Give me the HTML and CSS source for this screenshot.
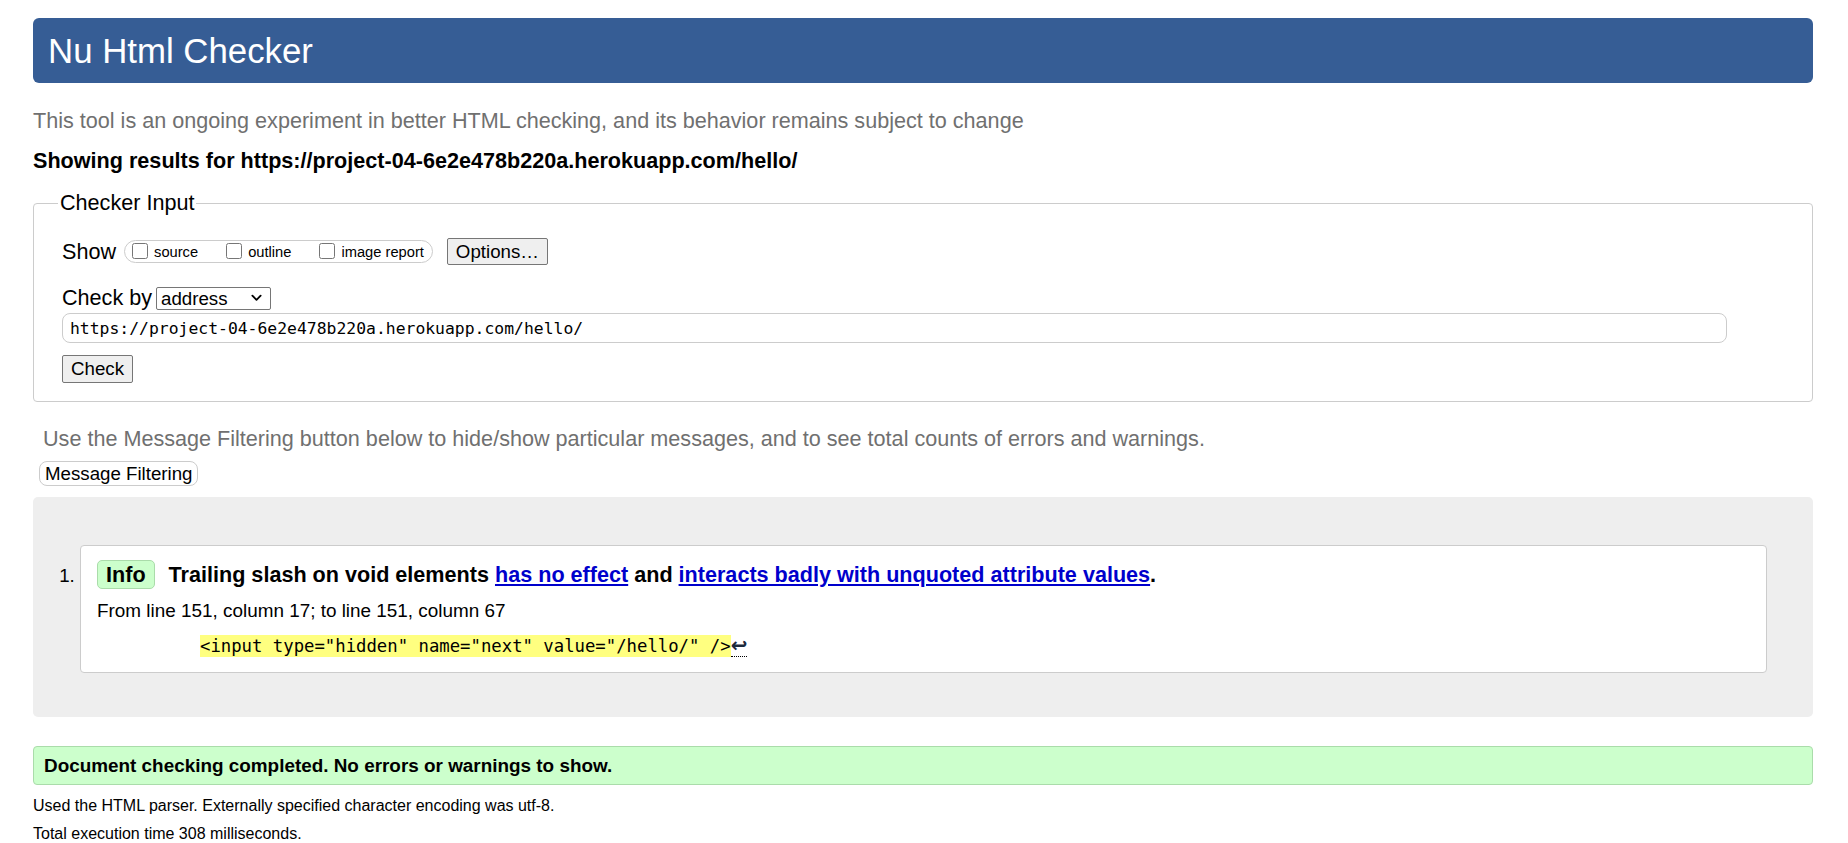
FILE: index.html
```html
<!DOCTYPE html>
<html lang="en">
<head>
<meta charset="utf-8">
<title>Showing results for https://project-04-6e2e478b220a.herokuapp.com/hello/ - Nu Html Checker</title>
<link rel="stylesheet" href="styles.css">
</head>
<body>
<h1 class="banner">Nu Html Checker</h1>
<p class="intro">This tool is an ongoing experiment in better HTML checking, and its behavior remains subject to change</p>
<p class="showing">Showing results for https://project-04-6e2e478b220a.herokuapp.com/hello/</p>
<form class="checker-form">
  <fieldset class="input-box">
    <legend class="input-legend">Checker Input</legend>
    <div class="row row-show">
      <span class="row-label">Show</span>
      <span class="show-group">
        <label class="opt"><input class="cb" type="checkbox">source</label>
        <label class="opt"><input class="cb" type="checkbox">outline</label>
        <label class="opt opt-last"><input class="cb" type="checkbox">image report</label>
      </span>
      <button type="button" class="btn options-btn">Options…</button>
    </div>
    <div class="row row-checkby">
      <span class="row-label">Check by</span>
      <span class="select-wrap">
        <select class="select"><option>address</option></select>
        <svg class="chev" viewBox="0 0 12 8" aria-hidden="true"><path d="M1.5 1.5 L6 6 L10.5 1.5" stroke="#000" stroke-width="2" fill="none" stroke-linecap="round" stroke-linejoin="round"/></svg>
      </span>
    </div>
    <input class="url" type="text" value="https://project-04-6e2e478b220a.herokuapp.com/hello/">
    <div class="check-row"><button type="button" class="btn check-btn">Check</button></div>
  </fieldset>
</form>
<p class="filter-note">Use the Message Filtering button below to hide/show particular messages, and to see total counts of errors and warnings.</p>
<div class="filter-row"><button type="button" class="filter-btn">Message Filtering</button></div>
<ol class="messages">
  <li class="msg">
    <p class="msg-head"><span class="badge">Info</span><span class="msg-text">Trailing slash on void elements <a href="#" class="lnk">has no effect</a> and <a href="#" class="lnk">interacts badly with unquoted attribute values</a>.</span></p>
    <p class="location">From line 151, column 17; to line 151, column 67</p>
    <p class="extract"><code class="hl">&lt;input type="hidden" name="next" value="/hello/" /&gt;</code><span class="lf">↩</span></p>
  </li>
</ol>
<p class="success">Document checking completed. No errors or warnings to show.</p>
<p class="details details-first">Used the HTML parser. Externally specified character encoding was utf-8.</p>
<p class="details">Total execution time 308 milliseconds.</p>
</body>
</html>
```

FILE: styles.css
```css
html, body {
  background: #fff;
}
body {
  margin: 0;
  padding: 18px 35px 0 33px;
  font-family: "Liberation Sans", Arial, sans-serif;
  color: #000;
}
p { margin: 0; }

.banner {
  margin: 0;
  height: 65px;
  display: flex;
  align-items: center;
  padding-left: 15px;
  background: #365d95;
  color: #fff;
  font-weight: normal;
  font-size: 34.8px;
  border-radius: 6px;
}

.intro {
  margin-top: 26px;
  font-size: 21.6px;
  line-height: 24px;
  color: #707070;
}
.showing {
  margin-top: 16px;
  font-size: 21.6px;
  line-height: 24px;
  font-weight: bold;
}

.checker-form { margin: 18px 0 0; }
.input-box {
  margin: 0;
  min-width: 0;
  padding: 23px 28px 18px 28px;
  border: 1px solid #ccc;
  border-radius: 4px;
}
.input-legend {
  margin-left: -4px;
  padding: 0 2px;
  font-size: 21.6px;
  line-height: 24px;
}

.row {
  display: flex;
  align-items: center;
}
.row-show { height: 27px; }
.row-checkby { height: 24px; margin-top: 21px; }
.row-label {
  font-size: 21.6px;
  line-height: 24px;
}
.show-group {
  display: inline-flex;
  align-items: center;
  box-sizing: border-box;
  height: 23px;
  margin-left: 8px;
  padding: 1px 8px 0 7px;
  border: 1px solid #ccc;
  border-radius: 12px;
  font-size: 14.7px;
  line-height: 21px;
  white-space: nowrap;
}
.opt {
  display: inline-flex;
  align-items: center;
  margin-right: 28px;
}
.opt-last { margin-right: 0; }
.cb {
  width: 16px;
  height: 16px;
  margin: -3px 6px 0 0;
}

.btn {
  box-sizing: border-box;
  font-family: "Liberation Sans", Arial, sans-serif;
  font-size: 18.7px;
  color: #000;
  background: #efefef;
  border: 1px solid #767676;
  border-radius: 2px;
  padding: 0 8px;
}
.options-btn {
  height: 27px;
  margin-left: 14px;
}
.select-wrap {
  display: inline-flex;
  align-items: center;
  box-sizing: border-box;
  margin-left: 4px;
  width: 115px;
  height: 23px;
  background: #fff;
  border: 1px solid #767676;
  border-radius: 2px;
}
.select {
  -webkit-appearance: none;
  appearance: none;
  flex: 1;
  min-width: 0;
  height: 21px;
  margin: 0;
  padding: 0 0 0 4px;
  border: 0;
  background: transparent;
  font-family: "Liberation Sans", Arial, sans-serif;
  font-size: 18.7px;
  color: #000;
  outline: none;
}
.chev {
  width: 11px;
  height: 8px;
  margin-right: 8px;
  flex: none;
}
.url {
  display: block;
  box-sizing: border-box;
  margin-top: 3px;
  width: calc(100% - 57px);
  height: 30px;
  padding: 0 7px;
  border: 1px solid #ccc;
  border-radius: 8px;
  font-family: "DejaVu Sans Mono", "Liberation Mono", monospace;
  font-size: 16.4px;
  color: #000;
  background: #fff;
}
.check-row { margin-top: 12px; height: 28px; }
.check-btn { height: 28px; }

.filter-note {
  margin: 25px 0 0 10px;
  font-size: 21.6px;
  line-height: 24px;
  color: #707070;
}
.filter-row {
  margin: 10px 0 0 6px;
  height: 25px;
}
.filter-btn {
  box-sizing: border-box;
  height: 25px;
  padding: 0 5px;
  font-family: "Liberation Sans", Arial, sans-serif;
  font-size: 18.7px;
  color: #000;
  background: #fff;
  border: 1px solid #ccc;
  border-radius: 8px;
}

.messages {
  margin: 11px 0 0;
  padding: 48px 46px 44px 47px;
  background: #eee;
  border-radius: 5px;
  list-style: decimal outside;
}
.msg {
  background: #fff;
  border: 1px solid #ccc;
  border-radius: 4px;
  padding: 14px 16px 15px 16px;
  font-size: 18.9px;
}
.msg::marker {
  font-size: 18.7px;
}
.msg-head {
  display: flex;
  align-items: center;
  font-size: 21.6px;
  line-height: 27px;
  font-weight: bold;
}
.badge {
  display: inline-block;
  padding: 0 8px;
  background: #ccffcc;
  border: 1px solid #aadcaa;
  border-radius: 5px;
}
.msg-text { margin-left: 14px; }
.lnk { color: #0000cc; }
.location {
  margin-top: 11px;
  line-height: 22px;
}
.extract {
  margin: 13px 0 0 103px;
  line-height: 22px;
  height: 22px;
  display: flex;
  align-items: flex-start;
}
.hl {
  display: inline-block;
  height: 22px;
  line-height: 22px;
  font-family: "DejaVu Sans Mono", "Liberation Mono", monospace;
  font-size: 17.3px;
  background: #ffff80;
}
.lf {
  display: inline-block;
  height: 21px;
  line-height: 21px;
  font-family: "DejaVu Sans", sans-serif;
  font-size: 20px;
  font-weight: bold;
  color: #1c2a3c;
  border-bottom: 1px dotted #000;
}

.success {
  margin-top: 29px;
  box-sizing: border-box;
  height: 39px;
  padding-left: 10px;
  background: #ccffcc;
  border: 1px solid #aadcaa;
  border-radius: 4px;
  font-weight: bold;
  font-size: 18.9px;
  line-height: 37px;
}
.details {
  font-size: 16px;
  line-height: 28px;
}
.details-first { margin-top: 7px; }
```
